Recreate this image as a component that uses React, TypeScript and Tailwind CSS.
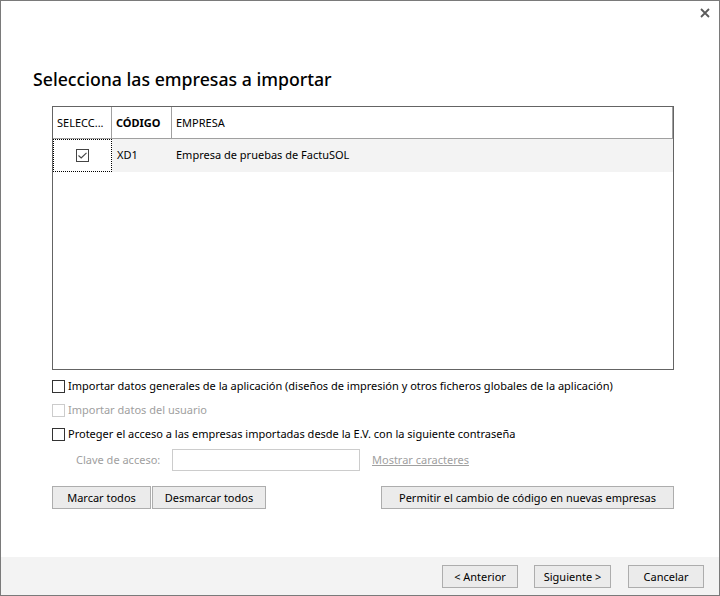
import React from "react";

const font = { fontFamily: '"Noto Sans", "Open Sans", sans-serif' };

function Box({ disabled = false }: { disabled?: boolean }) {
  return (
    <span
      className={`inline-block w-[13px] h-[13px] border bg-white shrink-0 ${
        disabled ? "border-[#cccccc]" : "border-[#333333]"
      }`}
    />
  );
}

function Btn({ children, className = "" }: { children: React.ReactNode; className?: string }) {
  return (
    <button
      className={`h-[23px] border border-[#adadad] bg-[#ebebeb] text-[11px] text-black flex items-center justify-center leading-none ${className}`}
    >
      {children}
    </button>
  );
}

export default function App() {
  return (
    <div
      className="w-[720px] h-[596px] border border-[#7a7a7a] bg-white flex flex-col text-[11px] text-black overflow-hidden"
      style={font}
    >
      <div className="h-[24px] flex justify-end items-center pr-[9px]">
        <svg width="10" height="10" viewBox="0 0 10 10">
          <path d="M1 1 L9 9 M9 1 L1 9" stroke="#5a5a5a" strokeWidth="1.8" />
        </svg>
      </div>
      <div className="flex-1 flex flex-col pl-[51px] pr-[45px]">
        <div className="mt-[42px] -ml-[19px] h-[24px] text-[17.7px] leading-[24px] font-medium">
          Selecciona las empresas a importar
        </div>
        <div className="mt-[15px] w-[622px] h-[264px] border border-[#646464] flex flex-col">
          <div className="h-[32px] flex border-b border-[#a0a0a0] shrink-0">
            <div className="w-[59px] border-r border-[#a0a0a0] flex items-center pl-[4px] pt-[2px] whitespace-nowrap overflow-hidden">
              SELECC...
            </div>
            <div className="w-[60px] border-r border-[#a0a0a0] flex items-center pl-[4px] pt-[2px] font-bold">
              CÓDIGO
            </div>
            <div className="flex-1 flex items-center pl-[4px] pt-[2px] border-r border-[#a0a0a0]">EMPRESA</div>
          </div>
          <div className="h-[33px] flex bg-[#f3f3f3] shrink-0">
            <div className="w-[59px] border border-dotted border-black flex items-center justify-center bg-white">
              <span className="w-[13px] h-[13px] border border-[#444444] flex items-center justify-center">
                <svg width="9" height="7" viewBox="0 0 9 7">
                  <path d="M0.5 3.5 L3.2 6 L8.5 0.8" stroke="#444444" strokeWidth="1.1" fill="none" />
                </svg>
              </span>
            </div>
            <div className="w-[60px] flex items-center pl-[5px]">XD1</div>
            <div className="flex-1 flex items-center pl-[4px]">Empresa de pruebas de FactuSOL</div>
          </div>
        </div>
        <div className="mt-[4px] h-[24px] flex items-center">
          <Box />
          <span className="ml-[3px] whitespace-nowrap">
            Importar datos generales de la aplicación (diseños de impresión y otros ficheros globales de la aplicación)
          </span>
        </div>
        <div className="h-[24px] flex items-center">
          <Box disabled />
          <span className="ml-[3px] text-[#a0a0a0]">Importar datos del usuario</span>
        </div>
        <div className="h-[24px] flex items-center">
          <Box />
          <span className="ml-[3px] whitespace-nowrap">
            Proteger el acceso a las empresas importadas desde la E.V. con la siguiente contraseña
          </span>
        </div>
        <div className="mt-[2px] h-[24px] flex items-center">
          <span className="ml-[24px] w-[96px] text-[#a0a0a0]">Clave de acceso:</span>
          <span className="w-[188px] h-[22px] border border-[#cccccc] bg-white" />
          <span className="ml-[12px] text-[#a0a0a0] underline">Mostrar caracteres</span>
        </div>
        <div className="mt-[14px] flex w-[622px]">
          <Btn className="w-[99px]">Marcar todos</Btn>
          <Btn className="ml-[1px] w-[114px]">Desmarcar todos</Btn>
          <div className="flex-1" />
          <Btn className="w-[293px]">Permitir el cambio de código en nuevas empresas</Btn>
        </div>
      </div>
      <div className="h-[38px] bg-[#f3f3f3] flex items-center justify-end pr-[15px] gap-0">
        <Btn className="w-[76px]">&lt; Anterior</Btn>
        <Btn className="ml-[16px] w-[77px]">Siguiente &gt;</Btn>
        <Btn className="ml-[17px] w-[76px]">Cancelar</Btn>
      </div>
    </div>
  );
}
